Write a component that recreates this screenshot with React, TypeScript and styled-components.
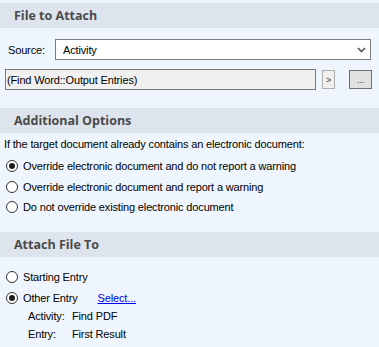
import React from "react";
import styled, { createGlobalStyle } from "styled-components";

const GlobalStyle = createGlobalStyle`
  html, body {
    margin: 0;
    padding: 0;
    background: #eef5fd;
  }
  body {
    font-family: "Liberation Sans", Arial, sans-serif;
    font-size: 11px;
    letter-spacing: -0.15px;
    color: #000;
  }
`;

const Page = styled.div`
  width: 379px;
  height: 347px;
  padding-top: 3px;
  box-sizing: border-box;
  background: #eef5fd;
  overflow: hidden;
`;

const Header = styled.div`
  height: 25px;
  background: #dde4ed;
  display: flex;
  align-items: center;
  padding-left: 14px;
  font-family: "Open Sans", sans-serif;
  font-weight: 700;
  font-size: 12.5px;
  letter-spacing: 0;
  color: #4a4a4a;
`;

const Body = styled.div<{ h: number }>`
  height: ${(p) => p.h}px;
  box-sizing: border-box;
`;

const SourceRow = styled.div`
  display: flex;
  align-items: center;
  padding: 11px 8px 0 8px;
`;

const Label = styled.span`
  width: 47px;
`;

const Select = styled.div`
  flex: 1;
  height: 21px;
  box-sizing: border-box;
  border: 1px solid #7a7a7a;
  background: #fff;
  display: flex;
  align-items: center;
  padding: 0 4px 0 7px;
  justify-content: space-between;
`;

const PathRow = styled.div`
  display: flex;
  align-items: center;
  padding: 9px 7px 0 5px;
`;

const TextBox = styled.div`
  width: 312px;
  height: 21px;
  box-sizing: border-box;
  border: 1px solid #7a7a7a;
  background: #f0f0f0;
  display: flex;
  align-items: center;
  padding-left: 1px;
`;

const SmallButton = styled.div<{ dark?: boolean }>`
  height: 19px;
  box-sizing: border-box;
  width: ${(p) => (p.dark ? "23px" : "13px")};
  margin-left: ${(p) => (p.dark ? "14px" : "6px")};
  border: 1px solid ${(p) => (p.dark ? "#707070" : "#adadad")};
  background: ${(p) => (p.dark ? "#e1e1e1" : "#f0f0f0")};
  display: flex;
  align-items: flex-end;
  justify-content: center;
  font-size: 9px;
  padding-bottom: 3px;
  color: #333;
`;

const Intro = styled.div`
  padding: 2px 0 0 4px;
  height: 18px;
  line-height: 18px;
`;

const Options = styled.div<{ top: number }>`
  display: flex;
  flex-direction: column;
  padding: ${(p) => p.top}px 0 0 6px;
`;

const Option = styled.div`
  display: flex;
  align-items: center;
  height: 20.5px;
  gap: 5px;
`;

const Radio = styled.span<{ checked?: boolean }>`
  width: 12px;
  height: 12px;
  border-radius: 50%;
  border: 1px solid #333;
  background: #fff;
  box-sizing: border-box;
  display: flex;
  align-items: center;
  justify-content: center;
  &::after {
    content: "";
    width: 6px;
    height: 6px;
    border-radius: 50%;
    background: ${(p) => (p.checked ? "#1a1a1a" : "transparent")};
  }
`;

const Link = styled.span`
  color: #0000ee;
  text-decoration: underline;
  margin-left: 15px;
`;

const Details = styled.div`
  display: grid;
  grid-template-columns: 44px auto;
  padding-left: 28px;
  row-gap: 1px;
  line-height: 17px;
`;

const Chevron = () => (
  <svg width="9" height="6" viewBox="0 0 9 6">
    <path d="M1 1 L4.5 4.5 L8 1" stroke="#555" strokeWidth="1.6" fill="none" />
  </svg>
);

export default function App() {
  return (
    <Page>
      <GlobalStyle />
      <Header>File to Attach</Header>
      <Body h={80}>
        <SourceRow>
          <Label>Source:</Label>
          <Select>
            <span>Activity</span>
            <Chevron />
          </Select>
        </SourceRow>
        <PathRow>
          <TextBox>(Find Word::Output Entries)</TextBox>
          <SmallButton>&gt;</SmallButton>
          <SmallButton dark>...</SmallButton>
        </PathRow>
      </Body>
      <Header>Additional Options</Header>
      <Body h={99}>
        <Intro>If the target document already contains an electronic document:</Intro>
        <Options top={3}>
          <Option>
            <Radio checked />
            Override electronic document and do not report a warning
          </Option>
          <Option>
            <Radio />
            Override electronic document and report a warning
          </Option>
          <Option>
            <Radio />
            Do not override existing electronic document
          </Option>
        </Options>
      </Body>
      <Header>Attach File To</Header>
      <Body h={89}>
        <Options top={10}>
          <Option>
            <Radio />
            Starting Entry
          </Option>
          <Option>
            <Radio checked />
            Other Entry
            <Link>Select...</Link>
          </Option>
        </Options>
        <Details>
          <span>Activity:</span>
          <span>Find PDF</span>
          <span>Entry:</span>
          <span>First Result</span>
        </Details>
      </Body>
    </Page>
  );
}
